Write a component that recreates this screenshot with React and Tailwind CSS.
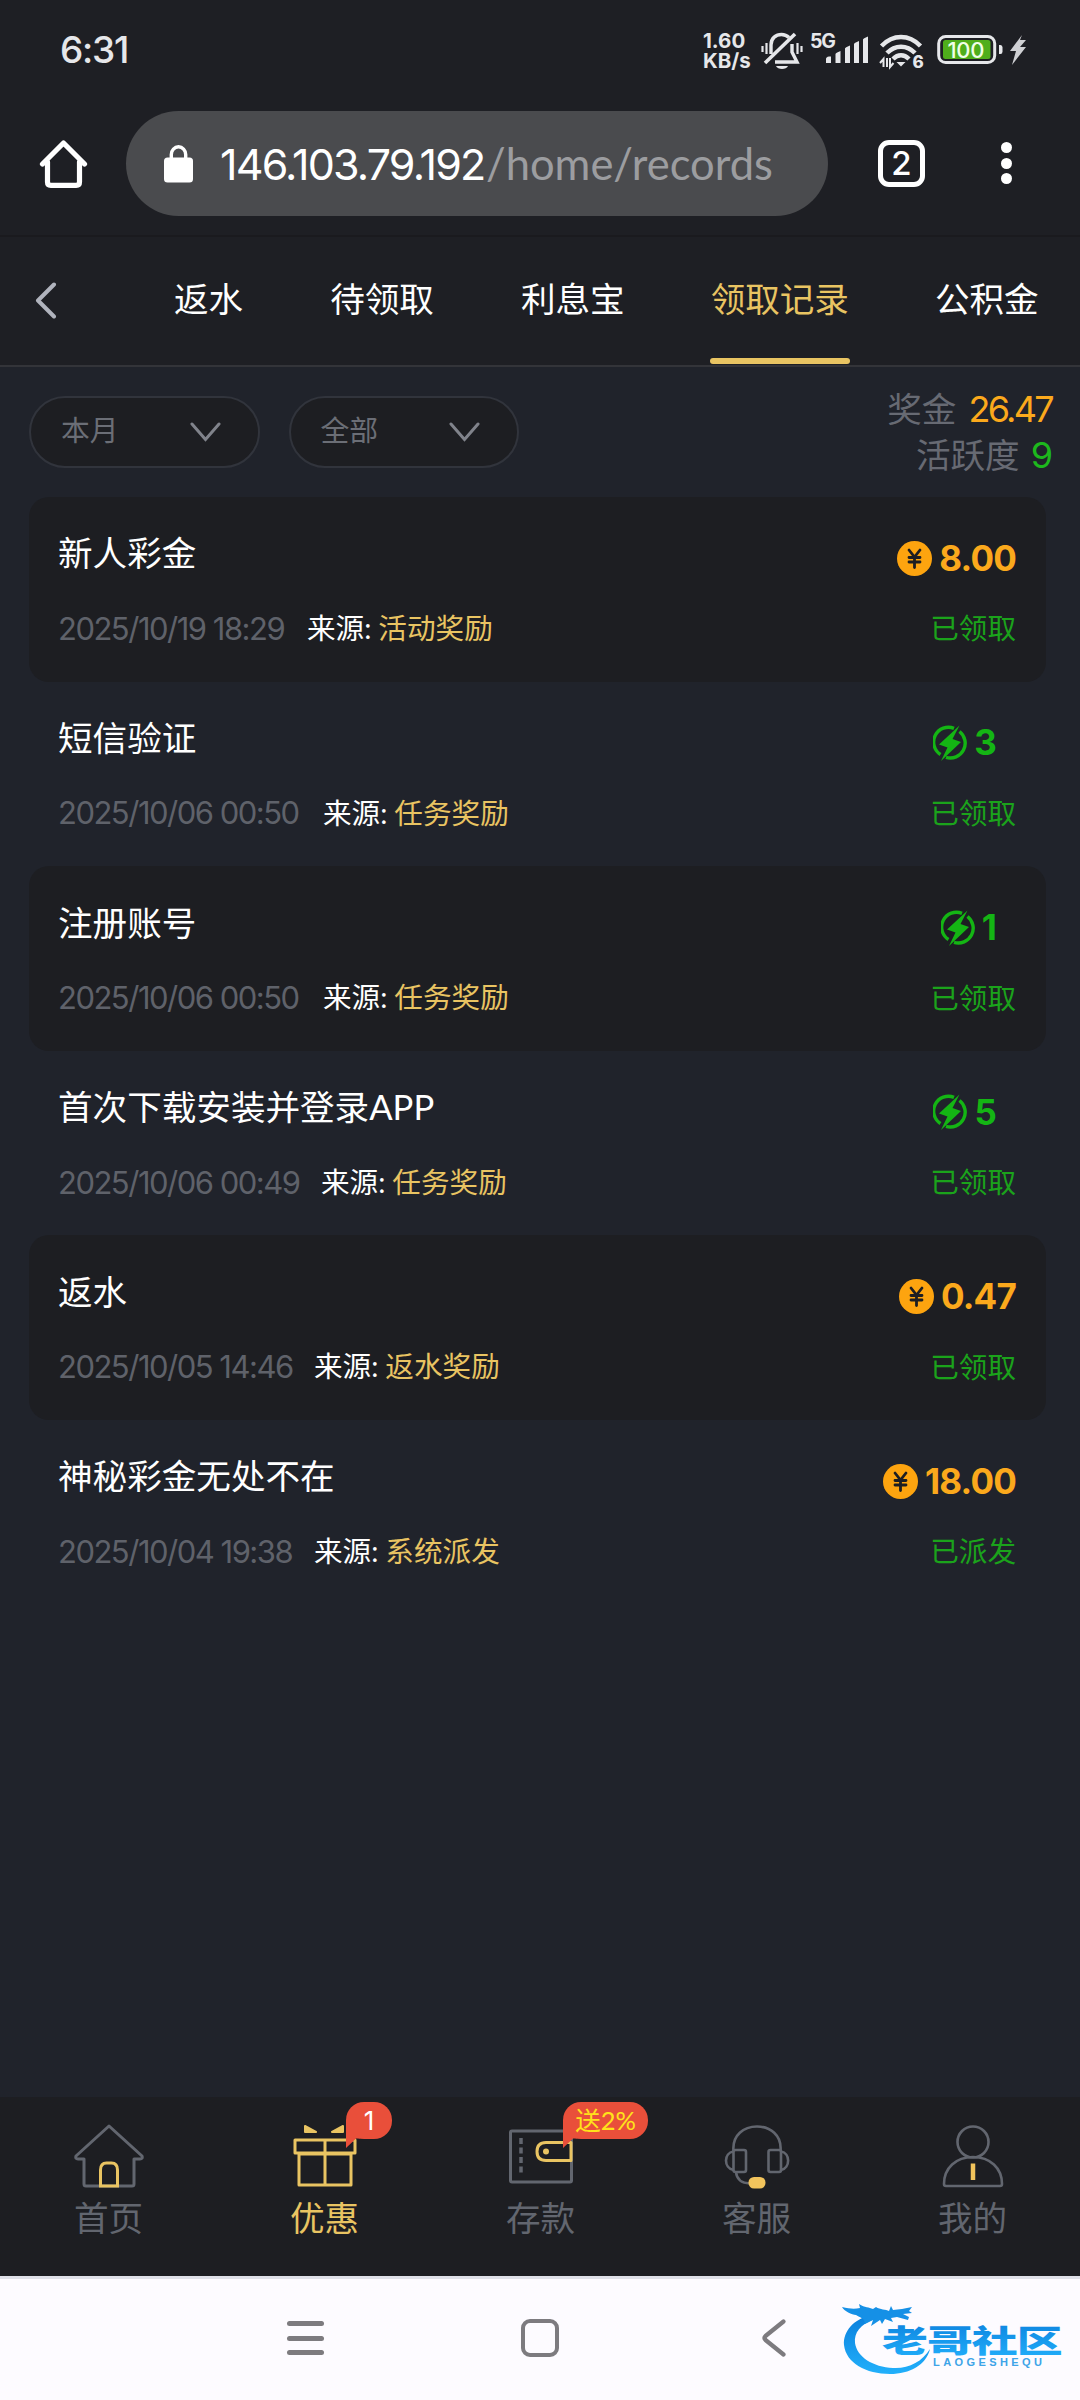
const tabs = [
  { name: "返水", className: "" },
  { name: "待领取", className: "ml-[87px]" },
  { name: "利息宝", className: "ml-[87px]" },
  { name: "领取记录", className: "ml-[86px]", active: true },
  { name: "公积金", className: "ml-[86px]" },
];

const records = [
  {
    title: "新人彩金",
    date: "2025/10/19 18:29",
    dateWidth: "w-[249px]",
    source: "活动奖励",
    amount: "8.00",
    coin: true,
    status: "已领取",
  },
  {
    title: "短信验证",
    date: "2025/10/06 00:50",
    dateWidth: "w-[265px]",
    source: "任务奖励",
    amount: "3",
    status: "已领取",
  },
  {
    title: "注册账号",
    date: "2025/10/06 00:50",
    dateWidth: "w-[265px]",
    source: "任务奖励",
    amount: "1",
    status: "已领取",
  },
  {
    title: "首次下载安装并登录APP",
    date: "2025/10/06 00:49",
    dateWidth: "w-[263px]",
    source: "任务奖励",
    amount: "5",
    status: "已领取",
  },
  {
    title: "返水",
    date: "2025/10/05 14:46",
    dateWidth: "w-[256px]",
    source: "返水奖励",
    amount: "0.47",
    coin: true,
    status: "已领取",
  },
  {
    title: "神秘彩金无处不在",
    date: "2025/10/04 19:38",
    dateWidth: "w-[256px]",
    source: "系统派发",
    amount: "18.00",
    coin: true,
    status: "已派发",
  },
];

function StatusBar() {
  return (
    <div className="flex h-[101px] items-start text-[#e6e7ea]">
      <span className="ml-[60px] mt-[31px] w-[643px] font-['Inter'] text-[37px] font-medium leading-[38px] tracking-[-1.200px]">
        6:31
      </span>
      <div className="mt-[31px] w-[58px] whitespace-nowrap font-['Inter'] text-[20.5px] font-bold leading-[19.5px]">
        <p>1.60</p>
        <p>KB/s</p>
      </div>
      <svg className="mt-[32px] h-[38px] w-[44px]" viewBox="0 0 44 38" fill="none" stroke="currentColor" strokeWidth="3">
        <path d="M4 31 34 2" strokeWidth="3.6" />
        <path d="M10 22V13C10 6 15 2.5 20.500 2.500c3 0 5.500 1 7.500 3" strokeWidth="3.400" />
        <path d="M31 12v8l5 10H14" strokeWidth="3.400" />
        <path d="M15 34h12c-1.500 4-10.500 4-12 0Z" fill="currentColor" stroke="none" />
        <path d="M5.500 11v11M1.500 14v6M36.500 11v11M40.500 14v6" strokeWidth="2.200" />
      </svg>
      <svg className="ml-[4px] mt-[32px] h-[34px] w-[60px] overflow-visible" viewBox="0 0 60 34" fill="currentColor">
        <text x="1" y="16" fontSize="19.500" fontWeight="700" textLength="26" fontFamily="Inter">5G</text>
        <path d="M17 31v-4q0-2 3-2.500h2V31zM26.500 31V22q0-1 5-3v12zM36 31V16.500q0-1 5-3V31zM45 31V12q0-1 5-3v22zM54 31V7.500q0-1 5-3V31z" />
      </svg>
      <svg className="ml-[9px] mt-[33px] h-[36px] w-[48px] overflow-visible" viewBox="0 0 48 36" fill="none" stroke="currentColor" strokeWidth="4.500">
        <path d="M3.500 13C15 1 31 1 42.500 13M9 20c8-8.500 20-8.500 28 0" />
        <path d="M15 26c5-5 11-5 16 0" />
        <path d="M18.500 29h9L23 33.500z" fill="currentColor" stroke="none" />
        <path d="M5.500 34v-8l-3.500 4M12 25v9l3.500-4M9 25v9" strokeWidth="2" />
        <text x="34.500" y="34.500" fontSize="17" fontWeight="800" fill="currentColor" stroke="none" fontFamily="Inter">6</text>
      </svg>
      <svg className="ml-[11px] mt-[35px] h-[30px] w-[92px]" viewBox="0 0 92 30">
        <rect x="1.700" y="1.500" width="56" height="26" rx="7" fill="none" stroke="currentColor" strokeWidth="3" />
        <rect x="6" y="5" width="47.500" height="19" rx="2.500" fill="#4fae1c" />
        <path d="M62 10h1.500q2 0 2 2.500v4q0 2.500-2 2.500H62z" fill="currentColor" />
        <text x="10.500" y="22.500" fontSize="22" fontWeight="500" textLength="37" fill="#f0ffe8" fontFamily="Inter">100</text>
        <path d="M85 0 73 16h6l-4 14 14-18h-6l6-7h-6z" fill="#cfd0d4" />
      </svg>
    </div>
  );
}

function BrowserBar() {
  return (
    <div className="flex h-[136px] items-start border-b-2 border-[#1a1a1e] pt-[10px]">
      <svg className="ml-[39px] mt-[28px] h-[50px] w-[50px]" viewBox="0 0 50 50" fill="none" stroke="#fff" strokeWidth="5.200" strokeLinejoin="round" strokeLinecap="round">
        <path d="M3.500 25 24.500 4 45.500 25M8.500 23v20q0 3.300 3.300 3.300h25.400q3.300 0 3.300-3.300V23" />
      </svg>
      <div className="ml-[37px] flex h-[105px] w-[702px] items-center rounded-full bg-[#4a4b4e]">
        <svg className="ml-[38px] h-[38px] w-[29px]" viewBox="0 0 29 38">
          <rect y="12.500" width="29" height="25" rx="3.500" fill="#fff" />
          <path d="M7.300 14V9.500a7.200 7.700 0 0 1 14.400 0V14" fill="none" stroke="#fff" strokeWidth="3.400" />
        </svg>
        <p className="ml-[27px] flex items-baseline whitespace-nowrap leading-none">
          <span className="w-[266px] font-['Inter'] text-[43px] tracking-[-1.800px] text-white">146.103.79.192</span>
          <span className="text-[43.5px] text-[#9c9da0]">/home/records</span>
        </p>
      </div>
      <div className="ml-[50px] mt-[29px] flex h-[47px] w-[47px] items-center justify-center rounded-[11px] border-[5px] border-white font-['Inter'] text-[33px] font-medium leading-none text-white">
        2
      </div>
      <div className="ml-[76px] mt-[31px] flex flex-col gap-[4.500px]">
        <i className="size-[11px] rounded-full bg-white" />
        <i className="size-[11px] rounded-full bg-white" />
        <i className="size-[11px] rounded-full bg-white" />
      </div>
    </div>
  );
}

function Tabs() {
  return (
    <div className="flex h-[130px] items-stretch border-b-2 border-[#333439] text-[34.6px] text-white">
      <svg className="ml-[35px] mt-[45px] h-[37px] w-[22px]" viewBox="0 0 22 37" fill="none" stroke="#b0b3bd" strokeWidth="4" strokeLinecap="round" strokeLinejoin="round">
        <path d="M19 2.500 3 18.500l16 16" />
      </svg>
      <nav className="ml-[117px] flex">
        {tabs.map((tab) => (
          <div key={tab.name} className={tab.className}>
            {tab.active ? (
              <div className="relative flex h-full items-center pb-[3px] text-[#e9c462]">
                <span className="leading-none">{tab.name}</span>
                <i className="absolute -left-px bottom-px h-[6px] w-[140px] rounded-full bg-[#e9c462]" />
              </div>
            ) : (
              <div className="flex h-full items-center pb-[3px]">
                <span className="leading-none">{tab.name}</span>
              </div>
            )}
          </div>
        ))}
      </nav>
    </div>
  );
}

function Select({ label }) {
  return (
    <div className="flex h-[72px] w-[230.5px] items-center justify-between rounded-full border-2 border-[#31343c] bg-[#1d1e22] pl-[30px] pr-[37px] text-[28.8px] leading-none text-[#6b6e76]">
      <span className="-mt-1">{label}</span>
      <svg className="h-[20px] w-[31px]" viewBox="0 0 31 20" fill="none" stroke="#80838b" strokeWidth="3" strokeLinecap="round">
        <path d="m2 2 13.500 15.500L29 2" />
      </svg>
    </div>
  );
}

function Filters() {
  return (
    <div className="flex h-[130px] items-start gap-[29px] pl-[29px] pr-[28px] pt-[29px]">
      <Select label="本月" />
      <Select label="全部" />
      <div className="-mt-[10px] ml-auto flex flex-col items-end text-[34.6px] leading-none text-[#676a73]">
        <p className="flex h-[46px] items-center">
          奖金
          <span className="ml-[12px] font-['Inter'] text-[36px] tracking-[-2.700px] text-[#fba91c]">26.47</span>
        </p>
        <p className="flex h-[46px] items-center">
          活跃度
          <span className="ml-[11px] font-['Inter'] text-[36px] tracking-[-1px] text-[#1db81d]">9</span>
        </p>
      </div>
    </div>
  );
}

function Coin() {
  return (
    <svg className="h-[35px] w-[35px]" viewBox="0 0 35 35">
      <circle cx="17.500" cy="17.500" r="17.500" fill="#fda40f" />
      <path d="m12 9 5.500 7L23 9M17.500 16v10.500M12 16.500h11M12 21h11" fill="none" stroke="#1d1e22" strokeWidth="2.800" strokeLinecap="round" />
    </svg>
  );
}

function Energy() {
  return (
    <svg className="h-[36px] w-[34px]" viewBox="0 0 34 36" fill="none" stroke="#14b514" strokeWidth="3.400">
      <path d="M21 3.300A14.800 14.800 0 0 0 7.500 29.500" />
      <path d="M26.500 6.500A14.800 14.800 0 0 1 13 32.300" />
      <path d="M26.500.500 6 19.500l8.500 3-6.500 13.500L28 17l-8.500-3z" fill="#14b514" stroke="none" />
    </svg>
  );
}

function RecordItem({ record, dark }) {
  return (
    <li className={dark ? "h-[184.6px] rounded-[20px] bg-[#1d1e22]" : "h-[184.6px]"}>
      <div className="flex justify-between pl-[29px] pr-[30px] pt-[38.4px]">
        <div>
          <h2 className="h-[38px] text-[34.6px] leading-[36px] text-white">{record.title}</h2>
          <div className="mt-[37px] flex h-[36px] items-center text-[28.6px] leading-none">
            <span className={"whitespace-nowrap font-['Inter'] text-[31px] tracking-[-1.500px] text-[#5f626a] " + record.dateWidth}>
              {record.date}
            </span>
            <span className="text-white">来源:</span>
            <span className="ml-[7px] text-[#e9c462]">{record.source}</span>
          </div>
        </div>
        <div className="flex flex-col items-end">
          {record.coin ? (
            <div className="mt-[4px] flex h-[38px] items-center gap-[7px] font-['Inter'] text-[35px] font-bold leading-none tracking-[-0.800px] text-[#fba91c]">
              <Coin />
              <span>{record.amount}</span>
            </div>
          ) : (
            <div className="mr-[20px] mt-[4px] flex h-[38px] items-center gap-[7px] font-['Inter'] text-[35px] font-bold leading-none tracking-[-0.800px] text-[#14b514]">
              <Energy />
              <span>{record.amount}</span>
            </div>
          )}
          <span className="mt-[33px] text-[28.6px] leading-[36px] text-[#1ba31b]">{record.status}</span>
        </div>
      </div>
    </li>
  );
}

function HomeIcon() {
  return (
    <svg className="h-[64px] w-[70px]" viewBox="0 0 70 64" fill="none" stroke="#62666f" strokeWidth="3" strokeLinejoin="round">
      <path d="M35 2 68 32q1 3-2 3h-6v25q0 2-2 2H12q-2 0-2-2V35H4q-3 0-2-3z" />
      <path d="M26.500 62V46q0-7 6-7h5q6 0 6 7v16z" stroke="#e9c462" strokeLinejoin="miter" />
    </svg>
  );
}

function GiftIcon() {
  return (
    <svg className="h-[64px] w-[64px]" viewBox="0 0 64 64" fill="none" stroke="#e9c462" strokeWidth="3" strokeLinejoin="round">
      <path d="M2 16h60v13H2zM6 30h52v31H6zM32 16v45" />
      <path d="m12 2 11 6H12zM50 2v6H39z" fill="#e9c462" stroke="#e9c462" strokeWidth="2" />
    </svg>
  );
}

function WalletIcon() {
  return (
    <svg className="h-[64px] w-[64px]" viewBox="0 0 64 64" fill="none" stroke="#62666f" strokeWidth="3" strokeLinejoin="round">
      <rect x="1.500" y="7" width="61" height="51" rx="1.500" />
      <path d="M12 14v36" strokeWidth="3.500" strokeDasharray="6 3.500" />
      <path d="M62 18.500H37q-9 0-9 9t9 9h25z" stroke="#e9c462" />
      <circle cx="37" cy="27.500" r="3" fill="#e9c462" stroke="none" />
    </svg>
  );
}

function ServiceIcon() {
  return (
    <svg className="h-[64px] w-[66px] overflow-visible" viewBox="0 0 66 64" fill="none" stroke="#62666f" strokeWidth="2.600">
      <path d="M9.500 27C8 11 20 2.500 33 2.500S58 11 56.500 27" />
      <rect x="9.500" y="26" width="12.500" height="22" rx="2" />
      <rect x="44.500" y="26" width="12.500" height="22" rx="2" />
      <path d="M9.500 27.500C-.500 29-.500 44 9.500 46M57 27.500c9.500 1.500 9.500 16.500 0 18.500M12 48q1 11 14 11.500" />
      <rect x="24.500" y="53" width="17" height="11.500" rx="5.500" fill="#f2c45c" stroke="none" />
    </svg>
  );
}

function MineIcon() {
  return (
    <svg className="h-[64px] w-[62px]" viewBox="0 0 62 64" fill="none" stroke="#62666f" strokeWidth="2.600" strokeLinejoin="round">
      <circle cx="31" cy="18" r="15.500" />
      <path d="M2 60C2 44 14 33 31 33s29 11 29 27q0 2-2 2H4q-2 0-2-2z" />
      <path d="M31 39.500v16.500" stroke="#f2c45c" strokeWidth="4.500" />
    </svg>
  );
}

function Badge({ children, className }) {
  return (
    <div className={"absolute top-[5px] flex h-[37px] items-center justify-center rounded-[18px] bg-[#e94f3a] leading-none " + className}>
      <svg className="absolute left-0 top-[18px] h-[28px] w-[14px]" viewBox="0 0 14 28">
        <path d="M0 0h14v18.500H10L0 28z" fill="#e94f3a" />
      </svg>
      <span className="relative">{children}</span>
    </div>
  );
}

function NavItem({ icon, label, active, children }) {
  return (
    <div className="relative flex w-[216px] flex-col items-center pl-px pt-[27px]">
      {icon}
      <span className={active ? "mt-[12px] text-[34.6px] leading-[36px] text-[#e9c462]" : "mt-[12px] text-[34.6px] leading-[36px] text-[#62666f]"}>
        {label}
      </span>
      {children}
    </div>
  );
}

function BottomNav() {
  return (
    <div className="mt-auto flex h-[179px] bg-[#1d1e22]">
      <NavItem icon={<HomeIcon />} label="首页" />
      <NavItem icon={<GiftIcon />} label="优惠" active>
        <Badge className="left-[130px] w-[46px] font-['Inter'] text-[26px] text-white">1</Badge>
      </NavItem>
      <NavItem icon={<WalletIcon />} label="存款">
        <Badge className="left-[131px] w-[85px] text-[25.5px] text-[#ffe21a]">送2%</Badge>
      </NavItem>
      <NavItem icon={<ServiceIcon />} label="客服" />
      <NavItem icon={<MineIcon />} label="我的" />
    </div>
  );
}

function Logo() {
  return (
    <svg className="absolute left-[838px] top-[20px] h-[80px] w-[230px]" viewBox="0 0 230 80">
      <defs>
        <linearGradient id="blue" x1="0" y1="0" x2="0" y2="1">
          <stop offset="0" stopColor="#0b7fdc" />
          <stop offset="1" stopColor="#22b0fb" />
        </linearGradient>
      </defs>
      <path
        d="M33 16C16 20 5 32 6 46c2 18 22 29 46 29 20 0 36-9 40-25-8 13-22 20-37 19-20-1-36-11-38-25-1-10 5-19 20-24z"
        fill="url(#blue)"
      />
      <path
        d="M4 8c8 2 13 2 18 1l-1-4c6 4 10 3 14 5l3-2c4 3 10 2 13 4l2-5 2 4 9-1 10-2-3 4 3 2-9 1 6 3-1 3-11-3-6 1 2 4-8-3-3 5-2-4-9 6 2-6-8 4c0-6-6-7-9-9-4 0-12-4-14-8z"
        fill="#1590e6"
      />
      <g transform="translate(44 53) scale(1.480 1)">
        <text x="0" y="0" fontSize="31" fontWeight="900" textLength="122" fill="url(#blue)" fontFamily="'Noto Sans CJK SC'">
          老哥社区
        </text>
      </g>
      <text x="95" y="67" fontSize="11" fontWeight="700" textLength="109" fill="#3ea4e8" fontFamily="Liberation Sans">
        LAOGESHEQU
      </text>
    </svg>
  );
}

function SystemNav() {
  return (
    <div className="relative flex h-[124px] items-start border-t-[3px] border-[#dfe0e8] bg-[#fdfbff] pt-[40px]">
      <div className="ml-[287px] mt-[2px] flex flex-col gap-[9.500px]">
        <i className="h-[5px] w-[37px] rounded-full bg-[#7d7b7f]" />
        <i className="h-[5px] w-[37px] rounded-full bg-[#7d7b7f]" />
        <i className="h-[5px] w-[37px] rounded-full bg-[#7d7b7f]" />
      </div>
      <i className="ml-[197px] size-[38px] rounded-[9px] border-[4px] border-[#7d7b7f]" />
      <svg className="ml-[202px] h-[38px] w-[25px]" viewBox="0 0 25 38" fill="none" stroke="#7d7b7f" strokeWidth="4.200" strokeLinecap="round" strokeLinejoin="round">
        <path d="M22.500 2.500 4.500 17q-2 2 0 4l18 14.500" />
      </svg>
      <Logo />
    </div>
  );
}

export default function App() {
  return (
    <div className="flex h-[2400px] w-[1080px] flex-col overflow-hidden bg-[#20232b] font-['Lato','Noto_Sans_CJK_SC',sans-serif]">
      <div className="bg-[#1e1f24]">
        <StatusBar />
        <BrowserBar />
        <Tabs />
      </div>
      <Filters />
      <ul className="ml-[29px] w-[1017px]">
        {records.map((record, i) => (
          <RecordItem key={record.title} record={record} dark={i % 2 === 0} />
        ))}
      </ul>
      <BottomNav />
      <SystemNav />
    </div>
  );
}
